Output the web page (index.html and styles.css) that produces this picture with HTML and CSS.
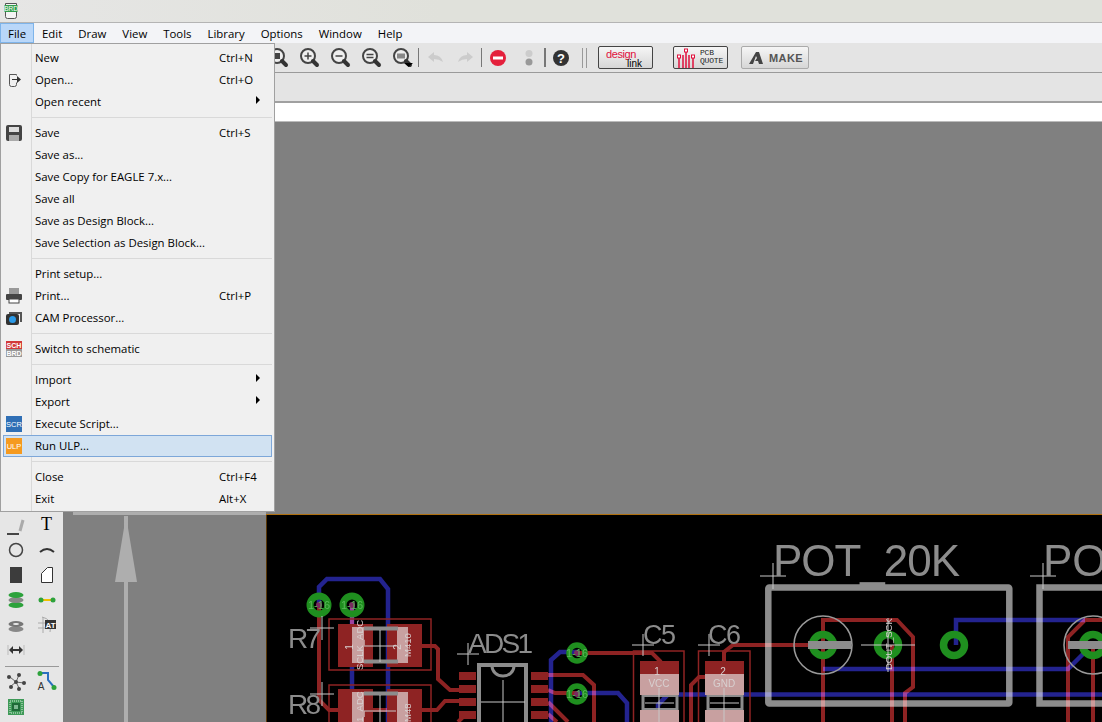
FILE: index.html
```html
<!DOCTYPE html>
<html>
<head>
    <meta charset="UTF-8">
    <title>Board editor</title>
    <link rel="stylesheet" href="styles.css">
</head>
<body>
<svg class="defs" width="0" height="0">
    <symbol id="lens" viewBox="0 0 24 24">
        <circle cx="10" cy="10" r="7" fill="#eee" stroke="#444" stroke-width="2"/>
        <path d="M15 15l4 4" stroke="#333" stroke-width="4" stroke-linecap="round"/>
    </symbol>
</svg>
<div id="wrap">
    <div class="titlebar">
        <svg class="app-ico" width="14" height="18" viewBox="0 0 14 18">
            <path d="M1.500 1.500h11v13q0 2-2 2h-7q-2 0-2-2z" fill="#f4f4f4" stroke="#555"/>
            <rect x="0.500" y="3" width="13" height="7" fill="#2f9e4a"/>
            <text class="ico-text" x="7" y="9" font-size="6.500" fill="#fff">BRD</text>
        </svg>
    </div>

    <ul class="menubar">
        <li class="on">File</li>
        <li>Edit</li>
        <li>Draw</li>
        <li>View</li>
        <li>Tools</li>
        <li>Library</li>
        <li>Options</li>
        <li>Window</li>
        <li>Help</li>
    </ul>

    <div class="toolbar">
        <div class="tool-btn"><svg width="24" height="24"><use href="#lens"/><rect x="7" y="7" width="6" height="6" fill="#444"/></svg></div>
        <div class="tool-btn"><svg width="24" height="24"><use href="#lens"/><path d="M6.500 10h7M10 6.500v7" stroke="#444" stroke-width="1.500"/></svg></div>
        <div class="tool-btn"><svg width="24" height="24"><use href="#lens"/><path d="M6.500 10h7" stroke="#444" stroke-width="1.500"/></svg></div>
        <div class="tool-btn"><svg width="24" height="24"><use href="#lens"/><path d="M6.500 8.500h7M6.500 11.500h7" stroke="#444" stroke-width="1.500"/></svg></div>
        <div class="tool-btn"><svg width="24" height="24"><use href="#lens"/><rect x="6" y="7.500" width="8" height="5" fill="#888"/><path d="M13 17h9l-4.500 4z" fill="#000"/></svg></div>
        <span class="tb-sep"></span>
        <div class="tool-btn"><svg width="24" height="24"><path d="M5 11l6-5v3q7 0 9 7-4-3-9-3v3z" fill="#ccc"/></svg></div>
        <div class="tool-btn"><svg width="24" height="24"><path d="M19 11l-6-5v3q-7 0-9 7 4-3 9-3v3z" fill="#ccc"/></svg></div>
        <span class="tb-sep"></span>
        <div class="tool-btn"><svg width="24" height="24"><circle cx="12" cy="12" r="8" fill="#e4203c"/><rect x="7" y="10.500" width="10" height="3" fill="#fff"/></svg></div>
        <div class="tool-btn"><svg width="24" height="24"><circle cx="12" cy="7.500" r="3.500" fill="#ccc"/><circle cx="12" cy="16" r="3.500" fill="#999"/></svg></div>
        <span class="tb-sep thick"></span>
        <div class="tool-btn"><svg width="24" height="24"><circle cx="12" cy="12" r="8" fill="#333"/><text class="ico-text" x="12" y="16.500" font-size="13" font-weight="700" fill="#fff">?</text></svg></div>
        <span class="tb-double"></span>
        <div class="link-btn design-link">
            <span class="dl-top">design</span>
            <span class="dl-bottom">link</span>
        </div>
        <div class="link-btn pcb-quote">
            <svg width="18" height="21" viewBox="0 0 18 21">
                <path d="M2 21V10M6 21V8M9 21V4M12 21V8M16 21V10" stroke="#e0103c" stroke-width="1.500" fill="none"/>
                <rect x="0.500" y="8" width="3" height="3" fill="#fff" stroke="#e0103c"/>
                <rect x="7.500" y="2" width="3" height="3" fill="#fff" stroke="#e0103c"/>
                <rect x="14.500" y="8" width="3" height="3" fill="#fff" stroke="#e0103c"/>
            </svg>
            <span>PCB<br>QUOTE</span>
        </div>
        <div class="link-btn make">
            <svg width="14" height="14" viewBox="0 0 14 14"><path d="M0 13L7 1h3l4 12h-4l-1-3H6l2-3-1-2-3 8z" fill="#444"/></svg>
            <span>MAKE</span>
        </div>
    </div>

    <div class="tabbar"></div>
    <div class="strip"></div>

    <div class="workspace">
        <div class="left-tools">
            <div class="tools-grid">
                <div class="tool"><svg width="24" height="24"><path d="M3 21h12" stroke="#111" stroke-width="1.500"/><path d="M16 18l3-11" stroke="#aaa" stroke-width="3"/></svg></div>
                <div class="tool tool-t">T</div>
                <div class="tool"><svg width="24" height="24"><circle cx="12" cy="12" r="6.500" fill="none" stroke="#444" stroke-width="1.500"/></svg></div>
                <div class="tool"><svg width="24" height="24"><path d="M5 14q7-6 14 0" fill="none" stroke="#333" stroke-width="2"/></svg></div>
                <div class="tool"><svg width="24" height="24"><rect x="6" y="4" width="12" height="16" fill="#3c3c3c"/></svg></div>
                <div class="tool"><svg width="24" height="24"><path d="M6.500 19.500v-9l6-6h5v15z" fill="#fff" stroke="#333"/></svg></div>
                <div class="tool"><svg width="24" height="24">
                    <ellipse cx="12" cy="17" rx="7.500" ry="3" fill="#2da23c"/>
                    <ellipse cx="12" cy="12" rx="7.500" ry="3" fill="#888"/>
                    <ellipse cx="12" cy="7" rx="7.500" ry="3" fill="#2da23c"/>
                </svg></div>
                <div class="tool"><svg width="24" height="24"><path d="M6 12h12" stroke="#f0c000" stroke-width="2"/><circle cx="6" cy="12" r="2.500" fill="#2da23c"/><circle cx="18" cy="12" r="2.500" fill="#2da23c"/></svg></div>
                <div class="tool"><svg width="24" height="24">
                    <ellipse cx="12" cy="16" rx="7.500" ry="3" fill="#888"/>
                    <ellipse cx="12" cy="11" rx="7.500" ry="3" fill="#777"/>
                    <ellipse cx="12" cy="11" rx="3" ry="1" fill="#eee"/>
                </svg></div>
                <div class="tool"><svg width="24" height="24">
                    <path d="M7 4q11 2 8 15M3 10h8M3 15h8M8 4v16" fill="none" stroke="#aaa"/>
                    <rect x="10" y="7" width="11" height="9" fill="#333"/>
                    <text class="ico-text" x="15.500" y="14.500" font-size="8" font-weight="700" fill="#fff">AT</text>
                </svg></div>
                <div class="tool"><svg width="24" height="24"><path d="M4 7v10M20 7v10" stroke="#bbb"/><path d="M6 12h12" stroke="#333" stroke-width="2"/><path d="M5 12l4-4v8zM19 12l-4-4v8z" fill="#333"/></svg></div>
                <div class="tool"></div>
                <div class="tools-sep"></div>
                <div class="tool"><svg width="24" height="24">
                    <path d="M12 12L6 7M12 12l3-7M12 12l8 1M12 12l-5 4M12 12l3 6" stroke="#666"/>
                    <circle cx="5" cy="7" r="2" fill="#444"/><circle cx="15" cy="5" r="2" fill="#444"/><circle cx="20" cy="13" r="2" fill="#444"/>
                    <circle cx="7" cy="17" r="2" fill="#444"/><circle cx="15" cy="19" r="2" fill="#444"/><circle cx="12" cy="12" r="2" fill="#444"/>
                </svg></div>
                <div class="tool"><svg width="24" height="24">
                    <path d="M6 3h7v7l6 7" fill="none" stroke="#2a6fc0" stroke-width="2"/>
                    <circle cx="5" cy="3.500" r="2.500" fill="#2da23c"/><circle cx="19" cy="17.500" r="2.500" fill="#2da23c"/>
                    <text class="ico-text" x="6" y="20" font-size="10" fill="#333">A</text>
                </svg></div>
                <div class="tool"><svg width="24" height="24">
                    <rect x="4" y="4" width="16" height="16" fill="#3f9a58"/>
                    <rect x="6" y="6" width="12" height="12" fill="none" stroke="#d8eadc" stroke-dasharray="1 1"/>
                    <rect x="8" y="8" width="8" height="8" fill="#1f6a38"/>
                    <rect x="10" y="10" width="4" height="4" fill="#7fb892"/>
                </svg></div>
            </div>
        </div>

        <svg class="board" width="1039" height="600" viewBox="63 122 1039 600">
            <rect x="63" y="122" width="1039" height="600" fill="#808080"/>
            <rect x="124" y="516" width="4" height="206" fill="#aeaeae"/>
            <path d="M126 516l-11 66h22z" fill="#aeaeae"/>
            <rect x="73" y="512" width="193" height="3" fill="#aeaeae"/>
            <rect x="266" y="515" width="836" height="207" fill="#000"/>
            <path d="M266 514.500H1102" stroke="#b0700f" fill="none"/>
            <path d="M266.500 515V722" stroke="#5a3808" fill="none"/>

            <g class="layers">
                <!-- bottom layer -->
                <g class="blue">
                    <polyline points="319,605 319,587 327,579 380,579 388,589 388,722"/>
                    <polyline points="352,605 352,722"/>
                    <polyline points="551,722 551,660 560,652 578,652"/>
                    <polyline points="578,693 618,693 627,703 627,722"/>
                    <polyline points="658,722 658,705 668,694.500 1102,694.500"/>
                    <polyline points="956,645 956,620 1085,620"/>
                    <polyline points="823,669 1068,669 1085,652"/>
                </g>
                <!-- top layer -->
                <g class="red">
                    <polyline points="319,605 319,700 329,710 437,710 445,701 459,701"/>
                    <polyline points="352,605 352,626"/>
                    <polyline points="422,646 435,646 438,649 438,679 450,690 459,690"/>
                    <polyline points="548,675 583,675 594,685 594,722"/>
                    <polyline points="578,653 652,653 661,662"/>
                    <polyline points="548,690 555,693 578,693"/>
                    <polyline points="548,702 568,722"/>
                    <polyline points="548,714 557,722"/>
                    <polyline points="458,722 465,715"/>
                    <polyline points="691,722 691,685 699,677 705,677"/>
                    <polyline points="724,661 724,652 733,645 823,645"/>
                    <polyline points="823,722 823,620 897,620 913,637 913,687 905,693 905,722"/>
                    <polyline points="892,645 892,722"/>
                    <polyline points="1068,722 1068,637 1085,620 1102,620"/>
                    <polyline points="1093,645 1093,722"/>
                </g>
                <g class="pads">
                    <rect x="338" y="624" width="35" height="43"/>
                    <rect x="387" y="624" width="35" height="43"/>
                    <rect x="338" y="689" width="35" height="33"/>
                    <rect x="387" y="689" width="35" height="33"/>
                    <rect x="459" y="672" width="17" height="8"/>
                    <rect x="459" y="685" width="17" height="8"/>
                    <rect x="459" y="698" width="17" height="8"/>
                    <rect x="459" y="711" width="17" height="8"/>
                    <rect x="531" y="672" width="17" height="8"/>
                    <rect x="531" y="685" width="17" height="8"/>
                    <rect x="531" y="698" width="17" height="8"/>
                    <rect x="531" y="711" width="17" height="8"/>
                    <rect x="640" y="661" width="39" height="13"/>
                    <rect x="705" y="661" width="39" height="13"/>
                </g>
                <g class="outline">
                    <rect x="329" y="619" width="102" height="51"/>
                    <path d="M329 722V685H431V722"/>
                    <path d="M633.500 722V651H684V722"/>
                    <path d="M698.500 722V651H750V722"/>
                </g>
                <g class="vias">
                    <circle cx="319" cy="605" r="9" stroke-width="7"/>
                    <circle cx="352" cy="605" r="9" stroke-width="7"/>
                    <circle cx="577" cy="653" r="8" stroke-width="5.500"/>
                    <circle cx="577" cy="694" r="8" stroke-width="5.500"/>
                    <circle cx="823" cy="645" r="10.500" stroke-width="7.500"/>
                    <circle cx="888" cy="645" r="10.500" stroke-width="7.500"/>
                    <circle cx="954" cy="645" r="10.500" stroke-width="7.500"/>
                    <circle cx="1093" cy="645" r="10.500" stroke-width="7.500"/>
                </g>
                <g class="drills">
                    <circle cx="319" cy="605" r="3"/>
                    <circle cx="352" cy="605" r="3"/>
                    <circle cx="577" cy="653" r="3"/>
                    <circle cx="577" cy="694" r="3"/>
                </g>
                <g class="names-fill">
                    <rect x="352" y="627" width="12" height="36"/>
                    <rect x="397" y="627" width="11" height="36"/>
                    <rect x="352" y="692" width="12" height="30"/>
                    <rect x="397" y="692" width="11" height="30"/>
                    <rect x="640" y="674" width="39" height="21"/>
                    <rect x="640" y="710" width="39" height="12"/>
                    <rect x="705" y="674" width="39" height="21"/>
                    <rect x="705" y="710" width="39" height="12"/>
                </g>
                <g class="silk">
                    <path d="M364 628.500H398M364 661.500H398"/>
                    <path d="M364 693.500H398"/>
                    <path d="M479 722V665H526V722"/>
                    <path d="M492 666a11 10 0 0 0 22 0" stroke-width="3"/>
                    <path d="M643 695V710M677 695V710M708 695V710M742 695V710" stroke-width="3"/>
                    <path d="M643 696H677M643 709H677M708 696H742M708 709H742" stroke-width="2"/>
                    <rect class="pot" x="768.300" y="587.500" width="241" height="116" rx="1"/>
                    <path class="pot" d="M1102 587.500H1039.500V703.500H1102"/>
                    <path d="M808 645H851" stroke-width="8"/>
                    <path d="M1068 645H1102" stroke-width="8"/>
                    <circle class="thin" cx="823" cy="645" r="29"/>
                    <circle class="thin" cx="1093" cy="645" r="29"/>
                </g>
                <g class="cross">
                    <path d="M310 628h24M322 616v24"/>
                    <path d="M310 694h24M322 682v24"/>
                    <path d="M364 646h32M380 630v32M364 711h32M380 695v27"/>
                    <path d="M457 654h22M468 643v22"/>
                    <path d="M481 702h44M503 680v42"/>
                    <path d="M632 645h22M643 634v22M698 645h22M709 634v22"/>
                    <path d="M645 703h29M659 688v34M710 703h29M724 688v34"/>
                    <path d="M760 576h26M773 563v26M1030 576h26M1043 563v26"/>
                    <path d="M861 645h54M888 618v54"/>
                </g>
                <g class="via-text">
                    <text x="319" y="609">1-16</text>
                    <text x="352" y="609">1-16</text>
                    <text x="577" y="657">1-16</text>
                    <text x="577" y="698">1-16</text>
                </g>
                <g class="pin-text">
                    <text x="657" y="675">1</text>
                    <text x="659" y="687">VCC</text>
                    <text x="723" y="675">2</text>
                    <text x="724" y="687">GND</text>
                    <text transform="translate(353,647) rotate(-90)">1</text>
                    <text transform="translate(401,647) rotate(-90)">2</text>
                    <text class="vert" transform="translate(363,670) rotate(-90)">SCLK_ADC</text>
                    <text class="vert" transform="translate(411,657) rotate(-90)">M410</text>
                    <text class="vert" transform="translate(363,722) rotate(-90)">1_ADC</text>
                    <text class="vert" transform="translate(411,722) rotate(-90)">M48</text>
                    <text class="vert" transform="translate(892,670) rotate(-90)">DOUT_SCK</text>
                </g>
                <g class="labels">
                    <text x="288" y="648" font-size="28" textLength="33">R7</text>
                    <text x="288" y="714" font-size="28" textLength="33">R8</text>
                    <text x="468" y="653" font-size="28" textLength="65">ADS1</text>
                    <text x="643" y="644" font-size="27" textLength="33">C5</text>
                    <text x="708" y="644" font-size="27" textLength="33">C6</text>
                    <text x="773" y="576" font-size="44" textLength="187">POT_20K</text>
                    <text x="1043" y="576" font-size="44">POT_20K</text>
                </g>
            </g>
        </svg>
    </div>

    <div class="file-menu">
        <ul>
            <li class="item"><span class="ico"></span><span class="label">New</span><span class="key">Ctrl+N</span></li>
            <li class="item">
                <span class="ico"><svg width="20" height="20"><path d="M12.500 5.500v-1h-7v10q0 2 2 2h3q2 0 2-2v-2" fill="none" stroke="#555"/><path d="M8 9h5V6l4 3.500-4 3.500v-3H8z" fill="#333"/></svg></span>
                <span class="label">Open...</span><span class="key">Ctrl+O</span>
            </li>
            <li class="item"><span class="ico"></span><span class="label">Open recent</span><span class="arrow"></span></li>
            <li class="sep"></li>
            <li class="item">
                <span class="ico"><svg width="20" height="20"><rect x="2" y="2" width="16" height="16" rx="2" fill="#444"/><rect x="5" y="4" width="10" height="5" fill="#ddd"/><rect x="5" y="12" width="10" height="6" fill="#aaa"/></svg></span>
                <span class="label">Save</span><span class="key">Ctrl+S</span>
            </li>
            <li class="item"><span class="ico"></span><span class="label">Save as...</span></li>
            <li class="item"><span class="ico"></span><span class="label">Save Copy for EAGLE 7.x...</span></li>
            <li class="item"><span class="ico"></span><span class="label">Save all</span></li>
            <li class="item"><span class="ico"></span><span class="label">Save as Design Block...</span></li>
            <li class="item"><span class="ico"></span><span class="label">Save Selection as Design Block...</span></li>
            <li class="sep"></li>
            <li class="item"><span class="ico"></span><span class="label">Print setup...</span></li>
            <li class="item">
                <span class="ico"><svg width="20" height="20"><rect x="5" y="2" width="10" height="6" fill="#999"/><rect x="2" y="8" width="16" height="6" rx="1" fill="#444"/><rect x="5" y="13" width="10" height="4" fill="#fff" stroke="#444"/></svg></span>
                <span class="label">Print...</span><span class="key">Ctrl+P</span>
            </li>
            <li class="item">
                <span class="ico"><svg width="20" height="20"><path d="M5 4h13v10h-2V6H5z" fill="#555"/><rect x="2" y="6" width="13" height="11" rx="2" fill="#333"/><circle cx="8.500" cy="11.500" r="3.500" fill="#2b9ae8"/></svg></span>
                <span class="label">CAM Processor...</span>
            </li>
            <li class="sep"></li>
            <li class="item">
                <span class="ico"><svg width="20" height="20"><rect x="2" y="2" width="16" height="8" fill="#d23a3a"/><rect x="2" y="10" width="16" height="8" fill="#999"/><text class="ico-text" x="10" y="8.500" font-size="7" font-weight="700" fill="#fff">SCH</text><text class="ico-text" x="10" y="16.500" font-size="7" font-weight="700" fill="#fff">BRD</text></svg></span>
                <span class="label">Switch to schematic</span>
            </li>
            <li class="sep"></li>
            <li class="item"><span class="ico"></span><span class="label">Import</span><span class="arrow"></span></li>
            <li class="item"><span class="ico"></span><span class="label">Export</span><span class="arrow"></span></li>
            <li class="item">
                <span class="ico"><svg width="20" height="20"><rect x="2" y="2" width="16" height="16" fill="#2f6fb5"/><text class="ico-text" x="10" y="13" font-size="7.500" fill="#fff">SCR</text></svg></span>
                <span class="label">Execute Script...</span>
            </li>
            <li class="item on">
                <span class="ico"><svg width="20" height="20"><rect x="2" y="2" width="16" height="16" fill="#f59a20"/><text class="ico-text" x="10" y="13" font-size="7.500" fill="#fff">ULP</text></svg></span>
                <span class="label">Run ULP...</span>
            </li>
            <li class="sep"></li>
            <li class="item"><span class="ico"></span><span class="label">Close</span><span class="key">Ctrl+F4</span></li>
            <li class="item"><span class="ico"></span><span class="label">Exit</span><span class="key">Alt+X</span></li>
        </ul>
    </div>
</div>
</body>
</html>
```
FILE: styles.css
```css
html,body,ul,li{margin:0;padding:0;list-style:none;}
body{
    font-family:"Open Sans","Noto Sans",sans-serif;
    font-size:11.4px;
    color:#000;
    overflow:hidden;
}
.defs{position:absolute;}
#wrap{
    position:relative;
    display:flex;
    flex-direction:column;
    width:1102px;
    height:722px;
    overflow:hidden;
}
.ico-text{
    font-family:"Liberation Sans",sans-serif;
    text-anchor:middle;
}

/* title + menu */
.titlebar{
    display:flex;
    align-items:center;
    box-sizing:border-box;
    height:23px;
    padding-left:4px;
    background:linear-gradient(to right,#e6e6e5,#e0e1db 40%);
    border-bottom:1px solid #b4b4b4;
}
.menubar{
    display:flex;
    height:20px;
    background-color:#f3f4f7;
}
.menubar li{
    box-sizing:border-box;
    height:20px;
    padding:0 7px;
    line-height:19px;
    border:1px solid transparent;
}
.menubar li.on{
    background-color:#b9d7f9;
    border-color:#7eb4ea;
}

/* toolbars */
.toolbar{
    display:flex;
    align-items:center;
    box-sizing:border-box;
    height:30px;
    padding-left:263px;
    background-color:#e4e4e4;
    border-bottom:1px solid #9a9a9a;
}
.tool-btn{
    display:flex;
    justify-content:center;
    align-items:center;
    width:31px;
}
.tb-sep{
    width:1px;
    height:19px;
    background-color:#777;
}
.tb-sep.thick{
    width:2px;
    margin-right:-1px;
}
.tb-double{
    width:1px;
    height:20px;
    margin:0 10px 0 6px;
    background-color:#999;
    box-shadow:4px 0 0 #999;
}
.link-btn{
    display:flex;
    box-sizing:border-box;
    height:23px;
    background:linear-gradient(#f6f6f6,#d6d6d6);
    border:1px solid #444;
    border-radius:2px;
}
.design-link{
    flex-direction:column;
    width:55px;
    padding:3px 10px 0 7px;
    margin-left:5px;
    font-family:"Liberation Sans",sans-serif;
    font-size:10px;
    line-height:9px;
}
.dl-top{
    color:#e0103c;
    font-size:11px;
    letter-spacing:-.4px;
}
.dl-bottom{
    align-self:flex-end;
}
.pcb-quote{
    align-items:flex-end;
    gap:5px;
    width:55px;
    margin-left:20px;
    padding-left:3px;
    font-family:"Liberation Mono",monospace;
    font-size:8px;
    line-height:8px;
    letter-spacing:-.2px;
    color:#222;
}
.pcb-quote span{
    padding-bottom:3px;
}
.make{
    align-items:center;
    gap:6px;
    width:68px;
    margin-left:13px;
    padding-left:7px;
    border-color:#aaa;
    font-family:"Liberation Sans",sans-serif;
    font-size:11px;
    font-weight:700;
    letter-spacing:.4px;
    color:#555;
}
.tabbar{
    box-sizing:border-box;
    height:30px;
    background-color:#e4e4e4;
    border-bottom:2px solid #a0a0a0;
}
.strip{
    box-sizing:border-box;
    height:19px;
    background-color:#fff;
    border-bottom:1px solid #bbb;
}

/* left tools + canvas */
.workspace{
    display:flex;
    flex:1;
}
.left-tools{
    display:flex;
    flex-direction:column;
    justify-content:flex-end;
    box-sizing:border-box;
    width:63px;
    padding:0 0 3px 0;
    background-color:#e6e6e6;
}
.tools-grid{
    display:grid;
    grid-template-columns:31px 31px;
    grid-template-rows:repeat(6,25px) 7px repeat(2,25px);
}
.tool{
    display:flex;
    justify-content:center;
    align-items:center;
}
.tool-t{
    font-family:"Liberation Serif",serif;
    font-size:18px;
}
.tools-sep{
    grid-column:1 / -1;
    height:1px;
    margin:4px 3px 2px 5px;
    background-color:#999;
}
.board{
    display:block;
}
.board text{
    font-family:"Liberation Sans",sans-serif;
}
.layers{
    isolation:isolate;
}
.blue polyline{
    fill:none;
    stroke:#23238f;
    stroke-width:4.500;
}
.red polyline{
    fill:none;
    stroke:#8e2323;
    stroke-width:4;
    mix-blend-mode:screen;
}
.pads rect{
    fill:#8e2323;
}
.outline{
    fill:none;
    stroke:#8e2323;
    stroke-width:1.500;
}
.vias circle{
    fill:none;
    stroke:#1f8f1f;
}
.drills circle{
    fill:#7a2a60;
}
.names-fill rect{
    fill:#c8a0a0;
}
.silk{
    fill:none;
    stroke:#8c8c8c;
    stroke-width:4;
}
.silk .pot{
    stroke-width:6.500;
    mix-blend-mode:screen;
}
.silk .thin{
    stroke:#9a9a9a;
    stroke-width:1.600;
}
.cross{
    fill:none;
    stroke:#c8c8c8;
    stroke-width:1;
}
.via-text text{
    font-size:11px;
    fill:#58b858;
    text-anchor:middle;
}
.pin-text text{
    font-size:10px;
    fill:#d8d0d0;
    text-anchor:middle;
}
.pin-text text.vert{
    font-size:9.500px;
    text-anchor:start;
}
.labels text{
    fill:#8c8c8c;
}

/* file menu */
.file-menu{
    position:absolute;
    top:43px;
    left:0;
    box-sizing:border-box;
    width:275px;
    padding:3px 2px 1px;
    background:linear-gradient(to right,#f0f0f0 30px,#d9d9d9 30px,#d9d9d9 31px,#f0f0f0 31px);
    border:1px solid #a0a0a0;
}
.item{
    display:flex;
    align-items:center;
    box-sizing:border-box;
    height:22px;
    padding-bottom:1px;
    border:1px solid transparent;
}
.item.on{
    background-color:#d1e2f2;
    border-color:#7da7d9;
}
.ico{
    display:flex;
    flex:none;
    align-items:center;
    width:31px;
    height:20px;
}
.label{
    flex:1;
}
.key{
    width:52px;
}
.arrow{
    width:0;
    height:0;
    margin:0 11px 4px 0;
    border-left:4px solid #000;
    border-top:4px solid transparent;
    border-bottom:4px solid transparent;
}
.sep{
    height:1px;
    margin:4px 0 4px 28px;
    background-color:#d9d9d9;
}
```
